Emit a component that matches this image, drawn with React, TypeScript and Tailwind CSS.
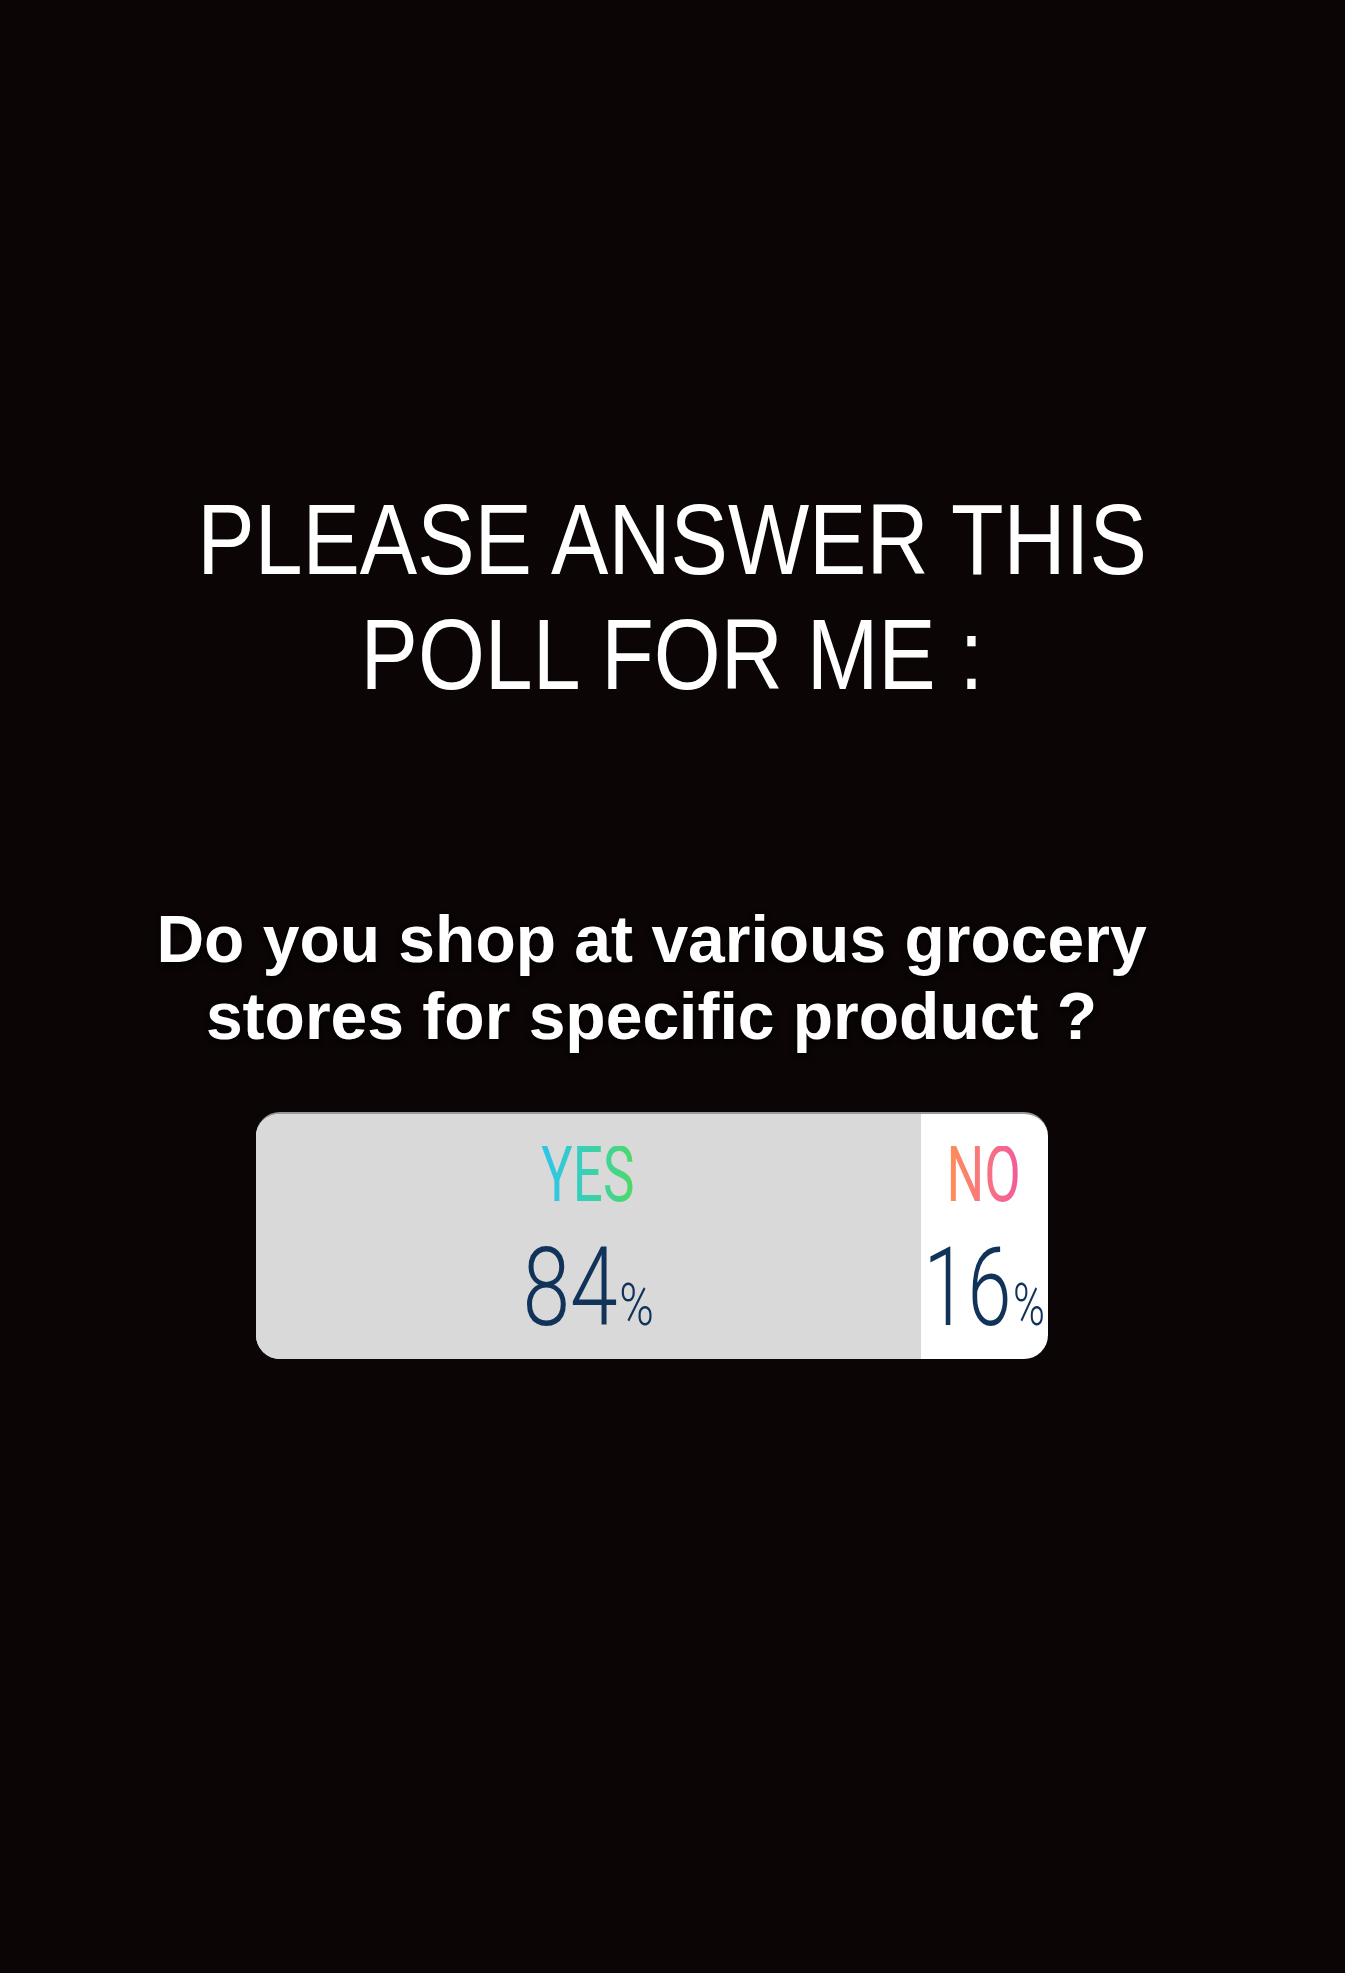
import React from 'react';

const App: React.FC = () => {
  const yes = 84;
  const no = 16;

  return (
    <div className="w-[1345px] h-[1973px] bg-[#0b0505] flex flex-col items-center font-['Liberation_Sans',Arial,sans-serif]">
      {/* Title */}
      <h1 className="mt-[482px] scale-x-[0.86] text-center text-white text-[100px] leading-[115px] font-normal whitespace-nowrap">
        PLEASE ANSWER THIS
        <br />
        POLL FOR ME :
      </h1>

      {/* Question */}
      <p className="mt-[189px] mr-[42px] text-center text-white text-[66px] leading-[77px] font-bold whitespace-nowrap [text-shadow:0_3px_6px_rgba(0,0,0,0.8)]">
        Do you shop at various grocery
        <br />
        stores for specific product ?
      </p>

      {/* Poll result */}
      <div className="mt-[57px] mr-[42px] w-[792px] h-[247px] rounded-[24px] overflow-hidden flex bg-white border-t-2 border-[#9a9a9a]">
        <div className="shrink-0 flex flex-col items-center bg-[#d9d9d9]" style={{ width: `${yes}%` }}>
          <span className="mt-[32px] h-[58px] inline-block scale-x-[0.68] font-['Roboto',sans-serif] font-normal text-[78px] leading-[58px] bg-gradient-to-r from-[#2fc3ef] to-[#4fd862] bg-clip-text text-transparent">
            YES
          </span>
          <div className="mt-[44px] flex items-baseline scale-x-[0.78] font-['Roboto',sans-serif] font-light text-[#11335a]">
            <span className="text-[110px] leading-[80px]">{yes}</span>
            <span className="text-[60px] leading-[40px] ml-[2px]">%</span>
          </div>
        </div>
        <div className="flex-1 min-w-0 flex flex-col items-center">
          <span className="mt-[32px] h-[58px] inline-block scale-x-[0.68] font-['Roboto',sans-serif] font-normal text-[78px] leading-[58px] bg-gradient-to-r from-[#fd8f54] to-[#f2579c] bg-clip-text text-transparent">
            NO
          </span>
          <div className="mt-[44px] flex items-baseline scale-x-[0.72] font-['Roboto',sans-serif] font-light text-[#11335a] whitespace-nowrap">
            <span className="text-[110px] leading-[80px]">{no}</span>
            <span className="text-[60px] leading-[40px] ml-[2px]">%</span>
          </div>
        </div>
      </div>
    </div>
  );
};

export default App;
